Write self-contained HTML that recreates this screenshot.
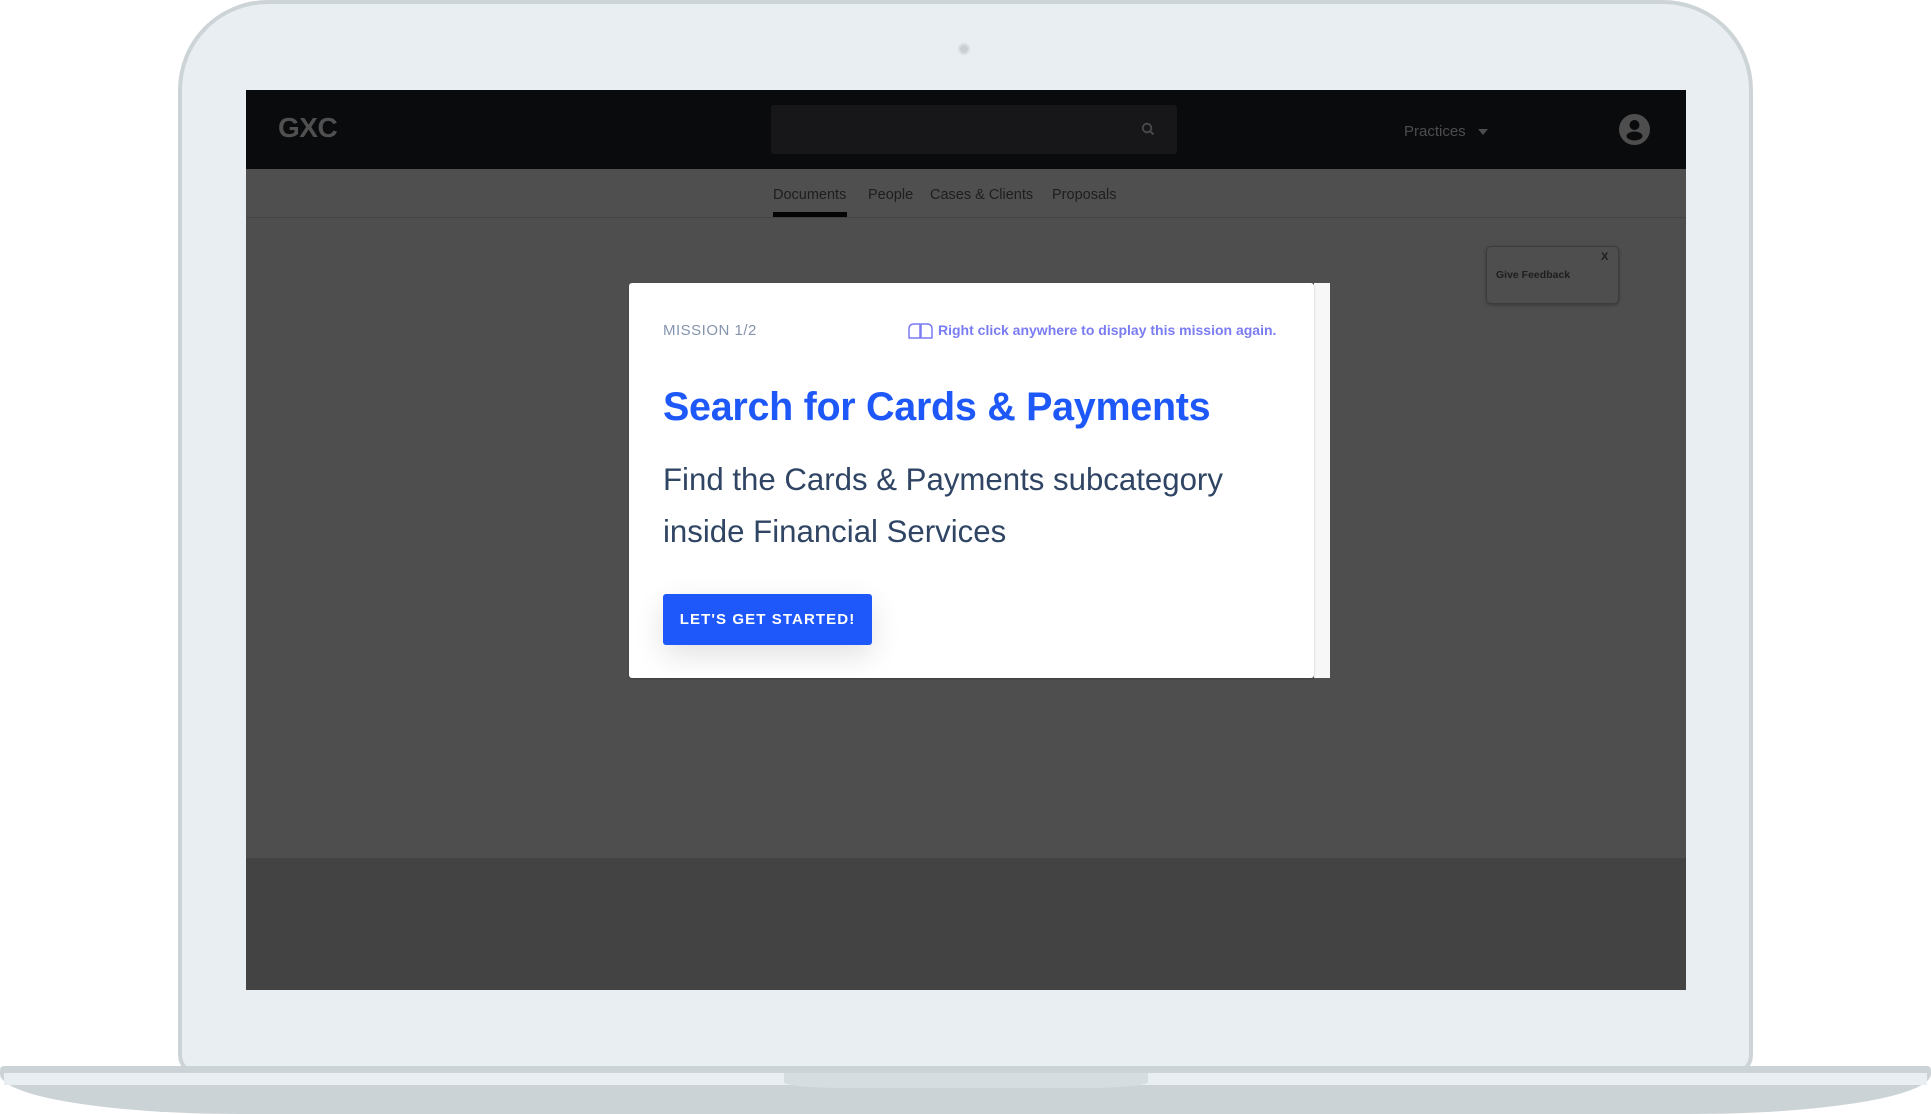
<!DOCTYPE html>
<html><head><meta charset="utf-8"><style>
*{margin:0;padding:0;box-sizing:border-box}
html,body{width:1931px;height:1114px;overflow:hidden;background:#fff;font-family:"Liberation Sans",sans-serif}
.abs{position:absolute}
#lid{left:178px;top:0;width:1575px;height:1075px;background:#e8eef1;border:4px solid #cdd4d8;border-radius:90px 90px 20px 20px}
#cam{left:958px;top:43px;width:12px;height:12px;border-radius:50%;background:#c9cfd3;border:2px solid #d9dfe2}
#screen{left:246px;top:90px;width:1440px;height:900px;background:#4e4e4e;overflow:hidden}
#hdr{left:0;top:0;width:1440px;height:79px;background:#0a0b0d}
#gxc{left:32px;top:22px;font-size:28px;font-weight:bold;color:#505050;letter-spacing:-0.5px}
#search{left:525px;top:15px;width:406px;height:49px;background:#171719;border-radius:3px}
#prac{left:1158px;top:33px;font-size:15px;color:#4d4d4d}
#sub{left:0;top:79px;width:1440px;height:49px;background:#4f4f4f;border-bottom:1px solid #444}
.tab{top:97px;font-size:14.5px;color:#1e1e1e}
#ul{left:527px;top:122px;width:74px;height:5px;background:#050505}
#bottom{left:0;top:768px;width:1440px;height:132px;background:#434343}
#fb{left:1240px;top:156px;width:133px;height:58px;border:1.5px solid #3c3c3c;border-radius:5px;box-shadow:0 1px 3px rgba(0,0,0,.3)}
#modal{left:629px;top:283px;width:685px;height:395px;background:#fff;border-radius:3px;box-shadow:0 1px 2px rgba(0,0,0,.2)}
#strip{left:1314px;top:283px;width:16px;height:395px;background:#f7f7f7}
#mis{left:34px;top:39px;font-size:15px;color:#8494ad;letter-spacing:.5px}
#rc{left:309px;top:39px;font-size:14px;color:#7a7cf2;font-weight:bold;white-space:nowrap;letter-spacing:0}
#title{left:34px;top:102px;font-size:39.5px;font-weight:bold;color:#1e58f9;letter-spacing:-0.3px;white-space:nowrap}
#body{left:34px;top:171px;font-size:31.2px;line-height:52px;color:#2f4563;white-space:nowrap}
#btn{left:34px;top:311px;width:209px;height:51px;background:#1e58fb;border-radius:3px;color:#fff;font-size:15px;font-weight:bold;letter-spacing:1.1px;text-align:center;line-height:51px;box-shadow:0 10px 30px rgba(0,0,0,.12)}
#base{left:0;top:1066px;width:1931px;height:48px;background:#cbd3d6;border-radius:4px 4px 240px 240px/4px 4px 40px 40px}
#bstrip{left:4px;top:1073px;width:1923px;height:12px;background:#e8eef1}
#notch{left:784px;top:1073px;width:364px;height:15px;background:#d6dde0;border-radius:0 0 60px 60px/0 0 6px 6px}
</style></head><body>
<div id="lid" class="abs"></div>
<div id="cam" class="abs"></div>
<div id="screen" class="abs">
 <div id="hdr" class="abs">
  <div id="gxc" class="abs">GXC</div>
  <div id="search" class="abs">
   <svg class="abs" style="left:370px;top:17px" width="14" height="14" viewBox="0 0 14 14"><circle cx="6" cy="6" r="4.3" fill="none" stroke="#4a4a4a" stroke-width="1.8"/><path d="M9 9l3.5 3.5" stroke="#4a4a4a" stroke-width="2"/></svg>
  </div>
  <div id="prac" class="abs">Practices</div>
  <svg class="abs" style="left:1232px;top:39px" width="10" height="6"><path d="M0 0h10L5 6z" fill="#4d4d4d"/></svg>
  <svg class="abs" style="left:1373px;top:24px" width="31" height="31" viewBox="0 0 31 31"><circle cx="15.5" cy="15.5" r="15.5" fill="#4e4e4e"/><circle cx="15.5" cy="11" r="5" fill="#0a0b0d"/><ellipse cx="15.5" cy="22" rx="8" ry="4.5" fill="#0a0b0d"/></svg>
 </div>
 <div id="sub" class="abs"></div>
 <div class="abs tab" style="left:527px">Documents</div>
 <div class="abs tab" style="left:622px">People</div>
 <div class="abs tab" style="left:684px">Cases &amp; Clients</div>
 <div class="abs tab" style="left:806px">Proposals</div>
 <div id="ul" class="abs"></div>
 <div id="bottom" class="abs"></div>
 <div id="fb" class="abs">
  <div class="abs" style="left:9px;top:22px;font-size:10.5px;font-weight:bold;color:#1e1e1e">Give Feedback</div>
  <div class="abs" style="left:114px;top:4px;font-size:11px;font-weight:bold;color:#1e1e1e">X</div>
 </div>
</div>
<div id="strip" class="abs"></div>
<div id="modal" class="abs">
 <div id="mis" class="abs">MISSION 1/2</div>
 <svg class="abs" style="left:279px;top:40px" width="26" height="16" viewBox="0 0 26 16"><path d="M1 15V6Q1 1 6 1h6v14zM13 15V1h6q5 0 5 5v9z" fill="none" stroke="#7a7cf2" stroke-width="1.5" stroke-linejoin="round"/></svg>
 <div id="rc" class="abs">Right click anywhere to display this mission again.</div>
 <div id="title" class="abs">Search for Cards &amp; Payments</div>
 <div id="body" class="abs">Find the Cards &amp; Payments subcategory<br>inside Financial Services</div>
 <div id="btn" class="abs">LET'S GET STARTED!</div>
</div>
<div id="base" class="abs"></div>
<div id="bstrip" class="abs"></div>
<div id="notch" class="abs"></div>
</body></html>
